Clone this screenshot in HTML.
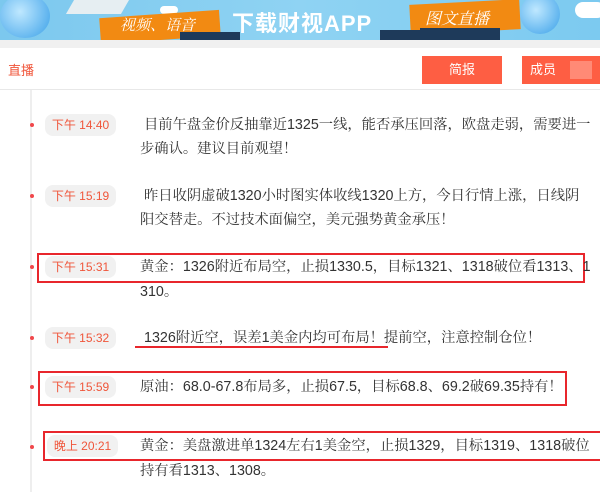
<!DOCTYPE html>
<html><head><meta charset="utf-8"><style>
body{margin:0;width:600px;height:492px;overflow:hidden;background:#fff;font-family:"Liberation Sans","Noto Sans CJK SC",sans-serif;position:relative}
.ban{position:absolute;left:0;top:0;width:600px;height:40px;background:linear-gradient(90deg,#7cc8ee,#8fd3f3 50%,#7ccaf0);overflow:hidden}
.gray{position:absolute;left:0;top:40px;width:600px;height:8px;background:#f0f0f0}
.hdr{position:absolute;left:0;top:48px;width:600px;height:41px;border-bottom:1px solid #e8e8e8}
.abs{position:absolute}
.line{position:absolute;left:30px;top:90px;width:2px;height:402px;background:#eee}
.dot{position:absolute;left:30px;width:4px;height:4px;border-radius:2px;background:#f0474a}
.pill{position:absolute;left:45px;width:71px;height:22px;border-radius:8px;background:#f1f1f1;color:#f0553a;font-size:12px;line-height:22px;text-align:center}
.t{position:absolute;left:140px;font-family:"Liberation Sans","Noto Serif CJK SC",serif;font-size:14.3px;color:#333;white-space:nowrap;line-height:20px}
.box{position:absolute;border:2px solid #e8262c}
</style></head><body>
<div class="ban">
 <div class="abs" style="left:0;top:-6px;width:50px;height:44px;border-radius:50%;background:radial-gradient(circle at 40% 40%,#bfe8ff,#3aa0e8)"></div>
 <div class="abs" style="left:520px;top:-6px;width:40px;height:40px;border-radius:50%;background:radial-gradient(circle at 40% 40%,#bfe8ff,#3aa0e8)"></div>
 <div class="abs" style="left:575px;top:2px;width:30px;height:16px;border-radius:8px;background:#fff"></div>
 <div class="abs" style="left:160px;top:6px;width:18px;height:8px;border-radius:8px;background:#fff"></div>
 <div class="abs" style="left:70px;top:0;width:55px;height:14px;background:#e6eef2;transform:skewX(-30deg)"></div>
 <div class="abs" style="left:100px;top:14px;width:120px;height:26px;background:#f28a12;transform:rotate(-4deg)"></div>
 <div class="abs" style="left:120px;top:14px;color:#fff;font-size:15px;font-style:italic;font-family:'Noto Serif CJK SC',serif">视频、语音</div>
 <div class="abs" style="left:232px;top:6px;color:#fff;font-size:22px;font-weight:bold;letter-spacing:1px">下载财视APP</div>
 <div class="abs" style="left:410px;top:2px;width:110px;height:30px;background:#f28a12;transform:rotate(-3deg)"></div>
 <div class="abs" style="left:425px;top:6px;color:#fff;font-size:16px;font-style:italic;font-family:'Noto Serif CJK SC',serif">图文直播</div>
 <div class="abs" style="left:380px;top:30px;width:40px;height:10px;background:#1e3a5a"></div>
 <div class="abs" style="left:420px;top:28px;width:80px;height:12px;background:#1e3a5a"></div>
 <div class="abs" style="left:180px;top:32px;width:60px;height:8px;background:#1e3a5a"></div>
</div>
<div class="gray"></div>
<div class="hdr">
 <div class="abs" style="left:8px;top:12px;color:#f0553a;font-size:13px">直播</div>
 <div class="abs" style="left:422px;top:8px;width:80px;height:28px;background:#fe5e43;color:#fff;font-size:13px;line-height:28px;text-align:center">简报</div>
 <div class="abs" style="left:522px;top:8px;width:78px;height:28px;background:#fe5e43;color:#fff;font-size:13px;line-height:28px;padding-left:8px;box-sizing:border-box">成员</div>
 <div class="abs" style="left:570px;top:13px;width:22px;height:18px;background:#ff8a76"></div>
</div>
<div class="line"></div>

<div class="dot" style="top:123px"></div><div class="pill" style="top:114px">下午 14:40</div>
<div class="t" style="top:115px;left:144px">目前午盘金价反抽靠近1325一线，能否承压回落，欧盘走弱，需要进一</div>
<div class="t" style="top:139px">步确认。建议目前观望！</div>

<div class="dot" style="top:194px"></div><div class="pill" style="top:185px">下午 15:19</div>
<div class="t" style="top:186px;left:144px">昨日收阴虚破1320小时图实体收线1320上方，今日行情上涨，日线阴</div>
<div class="t" style="top:210px">阳交替走。不过技术面偏空，美元强势黄金承压！</div>

<div class="box" style="left:37px;top:253px;width:544px;height:26px"></div>
<div class="dot" style="top:265px"></div><div class="pill" style="top:256px">下午 15:31</div>
<div class="t" style="top:257px">黄金：1326附近布局空，止损1330.5，目标1321、1318破位看1313、1</div>
<div class="t" style="top:282px">310。</div>

<div class="dot" style="top:336px"></div><div class="pill" style="top:327px">下午 15:32</div>
<div class="t" style="top:328px;left:144px">1326附近空，误差1美金内均可布局！提前空，注意控制仓位！</div>
<div class="abs" style="left:135px;top:346px;width:253px;height:2px;background:#e8262c"></div>

<div class="box" style="left:38px;top:371px;width:525px;height:31px"></div>
<div class="dot" style="top:385px"></div><div class="pill" style="top:376px">下午 15:59</div>
<div class="t" style="top:377px">原油：68.0-67.8布局多，止损67.5，目标68.8、69.2破69.35持有！</div>

<div class="box" style="left:43px;top:431px;width:560px;height:26px"></div>
<div class="dot" style="top:445px"></div><div class="pill" style="top:435px;left:47px">晚上 20:21</div>
<div class="t" style="top:436px">黄金：美盘激进单1324左右1美金空，止损1329，目标1319、1318破位</div>
<div class="t" style="top:461px">持有看1313、1308。</div>
</body></html>
